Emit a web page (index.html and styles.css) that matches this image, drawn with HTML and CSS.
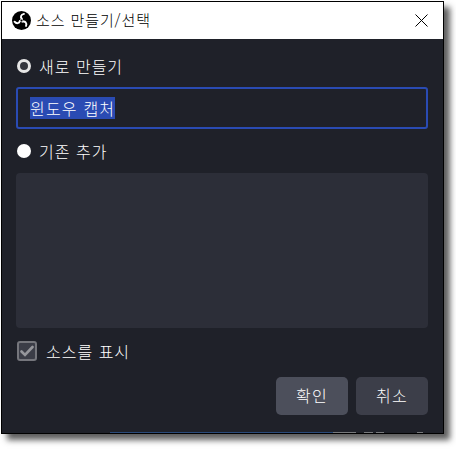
FILE: index.html
```html
<!DOCTYPE html>
<html lang="ko">
<head>
<meta charset="utf-8">
<title>소스 만들기/선택</title>
<link rel="stylesheet" href="styles.css">
</head>
<body>
<div class="window">
  <header class="titlebar">
    <svg class="logo" width="19" height="19" viewBox="0 0 20 20" aria-hidden="true">
      <circle cx="10" cy="10" r="10" fill="#000"/>
      <g fill="none" stroke="#fff" stroke-width="2" stroke-linecap="round">
        <path d="M10.4 8.2C8.6 6.6 9.2 3.6 12.6 3"/>
        <path d="M10.4 8.2C8.6 6.6 9.2 3.6 12.6 3" transform="rotate(120 10 10)"/>
        <path d="M10.4 8.2C8.6 6.6 9.2 3.6 12.6 3" transform="rotate(240 10 10)"/>
      </g>
      <circle cx="10" cy="10" r="1.4" fill="#000" stroke="#fff" stroke-width="0.8"/>
    </svg>
    <span class="title">소스 만들기/선택</span>
    <svg class="close" width="13" height="13" viewBox="0 0 13 13" aria-hidden="true">
      <path d="M0.5 0.5l12 12M12.5 0.5l-12 12" stroke="#000" stroke-width="1" fill="none"/>
    </svg>
  </header>
  <main class="body">
    <div class="option option-new">
      <span class="radio radio-on"></span>
      <span class="label">새로 만들기</span>
    </div>
    <div class="input"><span class="selection">윈도우 캡처</span></div>
    <div class="option option-existing">
      <span class="radio"></span>
      <span class="label">기존 추가</span>
    </div>
    <div class="list"></div>
    <div class="check-row">
      <span class="checkbox">
        <svg width="14" height="12" viewBox="0 0 14 12" aria-hidden="true">
          <path d="M1.5 6.5l3.5 3.5L12.5 2" stroke="#96979c" stroke-width="2.6" stroke-linecap="round" fill="none"/>
        </svg>
      </span>
      <span class="label">소스를 표시</span>
    </div>
    <div class="actions">
      <span class="btn btn-primary"><span class="btn-text">확인</span></span>
      <span class="btn btn-secondary"><span class="btn-text">취소</span></span>
    </div>
  </main>
  <div class="strip">
    <span class="strip-dark"></span>
    <span class="strip-blue"></span>
    <span class="strip-gray seg-a"></span>
    <span class="strip-gray seg-b"></span>
    <span class="strip-gray seg-c"></span>
    <span class="strip-gray seg-d"></span>
  </div>
</div>
</body>
</html>
```

FILE: styles.css
```css
* { box-sizing: border-box; }
html, body { margin: 0; padding: 0; background: #fff; }
body { width: 456px; height: 461px; padding: 1px 0 0 1px; overflow: hidden; }
.window {
  width: 443px;
  height: 433px;
  border: 1px solid #000;
  display: flex;
  flex-direction: column;
  background: #1f2129;
  box-shadow: 6px 6px 6px rgba(40, 40, 40, 0.75);
  font-family: "Noto Sans CJK KR", "Noto Sans", sans-serif;
  font-weight: 300;
  color: #fff;
}
.titlebar {
  height: 37px;
  flex: none;
  background: #fff;
  color: #000;
  display: flex;
  align-items: center;
  padding: 0 15px 0 10px;
}
.logo { flex: none; }
.title { margin: 0 0 2px 5px; font-size: 15px; letter-spacing: 0.9px; flex: 1; }
.close { flex: none; }
.body {
  flex: 1;
  padding: 0 15px 0 14px;
  display: flex;
  flex-direction: column;
}
.option { display: flex; align-items: center; height: 20px; }
.option-new { margin-top: 17px; }
.option-existing { margin-top: 12px; }
.label { font-size: 16px; letter-spacing: 1px; line-height: 20px; }
.radio {
  width: 14px;
  height: 14px;
  border-radius: 50%;
  background: #fff;
  margin: 0 8px 0 1px;
  flex: none;
}
.radio-on { background: #33353d; border: 3px solid #e6e6e6; }
.input {
  height: 42px;
  margin-top: 11px;
  border: 2px solid #2a4bb3;
  border-radius: 3px;
  display: flex;
  align-items: center;
  padding-left: 12px;
}
.selection {
  background: #2a4bb3;
  font-size: 16px;
  letter-spacing: 1.2px;
  line-height: 22px;
  height: 22px;
}
.list {
  height: 155px;
  margin-top: 12px;
  background: #2c2e38;
  border-radius: 4px;
}
.check-row { display: flex; align-items: center; height: 20px; margin-top: 13px; }
.checkbox {
  width: 20px;
  height: 20px;
  margin: 0 9px 0 1px;
  border: 2px solid #75767c;
  border-radius: 3px;
  background: #3b3d47;
  display: flex;
  align-items: center;
  justify-content: center;
  flex: none;
}
.actions { display: flex; justify-content: flex-end; gap: 8px; margin-top: 16px; }
.btn {
  width: 72px;
  height: 38px;
  border-radius: 5px;
  display: flex;
  align-items: center;
  justify-content: center;
  font-size: 16px;
  letter-spacing: 1.4px;
}
.btn-text { margin-bottom: 2px; }
.btn-primary { background: #4c4f5b; }
.btn-secondary { background: #3c3e49; }
.strip { height: 1px; flex: none; display: flex; }
.strip-dark { width: 108px; }
.strip-blue { width: 223px; background: #2a4a7a; }
.strip-gray { background: #77797c; }
.seg-a { width: 23px; }
.seg-b { width: 9px; margin-left: 8px; }
.seg-c { width: 8px; margin-left: 3px; }
.seg-d { width: 6px; margin-left: 33px; }
```
